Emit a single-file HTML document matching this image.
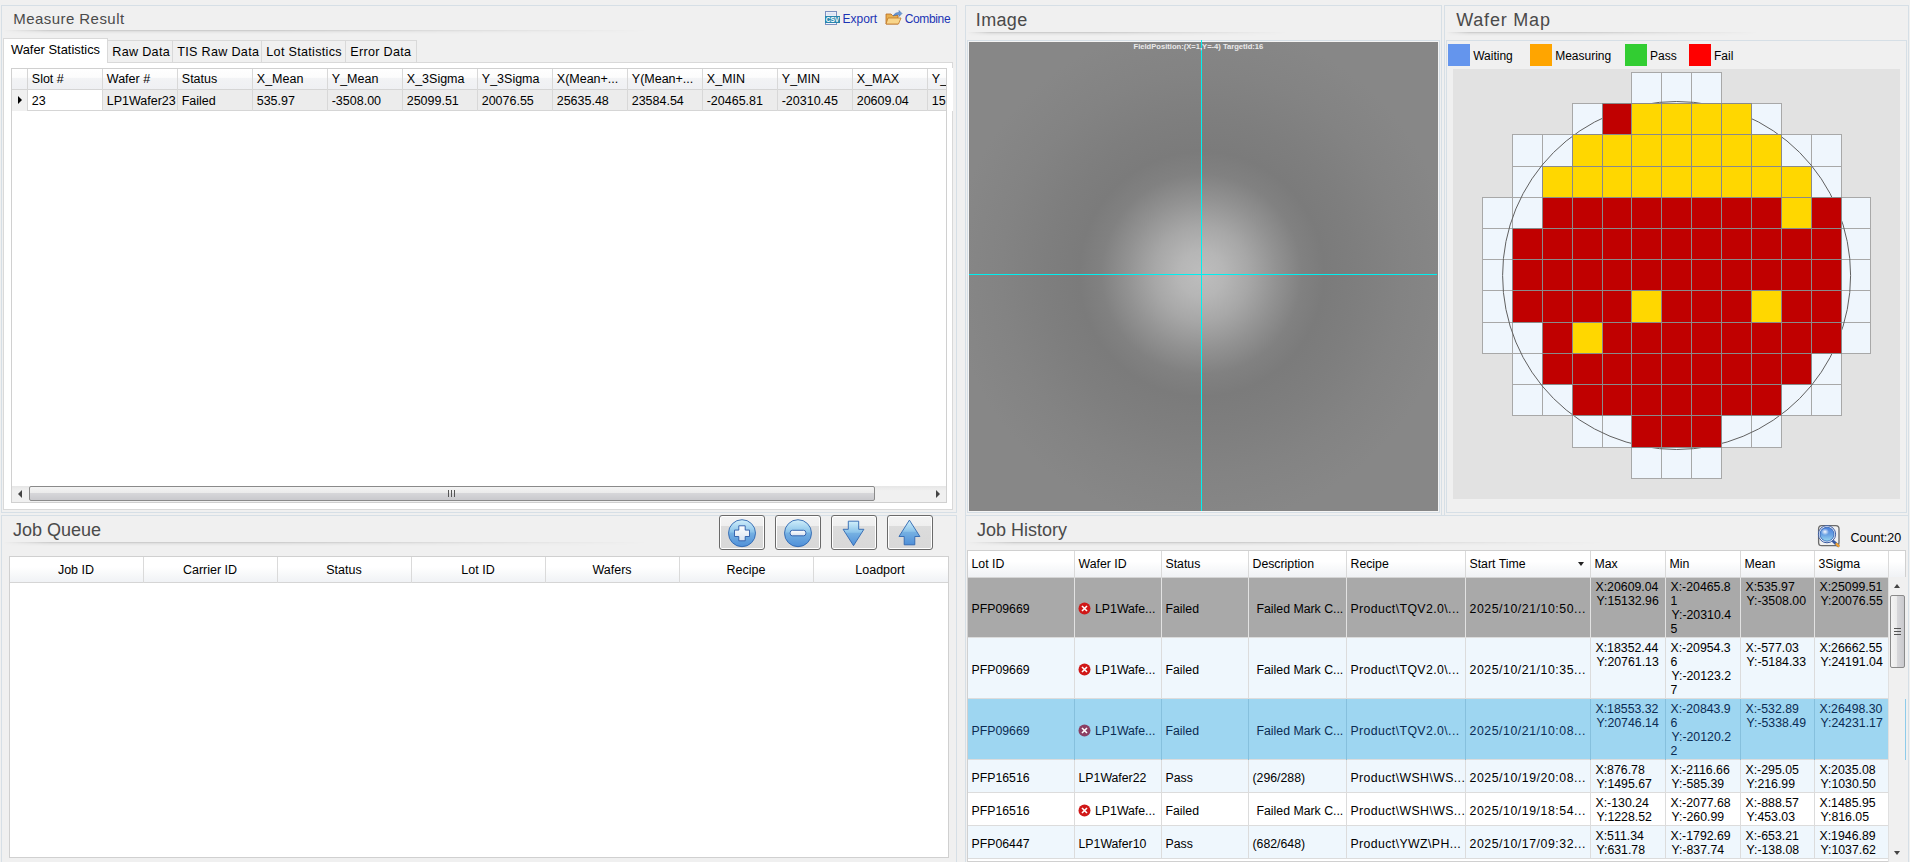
<!DOCTYPE html>
<html><head><meta charset="utf-8">
<style>
*{margin:0;padding:0;box-sizing:border-box}
html,body{width:1910px;height:862px;overflow:hidden;background:#f0f0f0;font-family:"Liberation Sans",sans-serif;font-size:12px;color:#000}
.a{position:absolute}
.t{position:absolute;white-space:nowrap}
.ttl{position:absolute;white-space:nowrap;color:#4a4a4a}
</style></head><body>

<div class="a" style="left:1px;top:5px;width:956px;height:508px;border:1px solid #d6dfe6"></div>
<div class="ttl" style="left:13.2px;top:10.5px;font-size:15px;line-height:15px;letter-spacing:0.45px">Measure Result</div>
<div class="a" style="left:3px;top:30px;width:951px;height:5px;background:linear-gradient(rgba(0,0,0,.14) 0 1px,rgba(0,0,0,.065) 1px 2px,rgba(0,0,0,.03) 2px 3px,rgba(0,0,0,.012) 3px 4px,rgba(0,0,0,0) 4px);-webkit-mask-image:linear-gradient(90deg,rgba(0,0,0,0) 0%,#000 5%,#000 28%,rgba(0,0,0,0) 68%);mask-image:linear-gradient(90deg,rgba(0,0,0,0) 0%,#000 5%,#000 28%,rgba(0,0,0,0) 68%)"></div>
<svg class="a" style="left:824px;top:10px" width="18" height="16" viewBox="0 0 18 16">
<rect x="1.5" y="1.5" width="11" height="13" fill="#f4f6fb" stroke="#7b8fc0"/>
<rect x="2.5" y="2.5" width="9" height="3" fill="#dfe5f4"/>
<rect x="1" y="6" width="15" height="7" fill="#2a86ad"/>
<text x="8.5" y="11.8" font-size="6.5" font-family="Liberation Sans" font-weight="bold" fill="#fff" text-anchor="middle">CSV</text>
</svg>
<div class="t" style="left:842.5px;top:12.6px;font-size:12px;line-height:12px;color:#1c34b4">Export</div>
<svg class="a" style="left:885px;top:10px" width="18" height="16" viewBox="0 0 18 16">
<path d="M1 4 h5 l1.5 1.5 h5.5 v8.5 h-12z" fill="#e8b050" stroke="#b86a20" stroke-width="0.8"/>
<path d="M3 8 h13 l-2.5 6 h-12.5z" fill="#f8d58a" stroke="#c07828" stroke-width="0.8"/>
<path d="M8 6 q2-4 6-3.5 v-2 l3 3 -3 3 v-2 q-3 0-6 1.5z" fill="#6b9ad6" stroke="#3d6fb0" stroke-width="0.5"/>
</svg>
<div class="t" style="left:904.7px;top:12.6px;font-size:12px;line-height:12px;color:#1c34b4;letter-spacing:-0.35px">Combine</div>
<div class="a" style="left:3px;top:62px;width:950px;height:448px;background:#fff;border:1px solid #d9d9d9"></div>
<div class="a" style="left:107px;top:40px;width:66px;height:23px;background:#f0f0f0;border:1px solid #d9d9d9"></div>
<div class="t" style="left:112.3px;top:46.3px;font-size:12.6px;line-height:12.6px;letter-spacing:0.3px">Raw Data</div>
<div class="a" style="left:172px;top:40px;width:90px;height:23px;background:#f0f0f0;border:1px solid #d9d9d9"></div>
<div class="t" style="left:177.3px;top:46.3px;font-size:12.6px;line-height:12.6px;letter-spacing:0.3px">TIS Raw Data</div>
<div class="a" style="left:261px;top:40px;width:85px;height:23px;background:#f0f0f0;border:1px solid #d9d9d9"></div>
<div class="t" style="left:266.3px;top:46.3px;font-size:12.6px;line-height:12.6px;letter-spacing:0.3px">Lot Statistics</div>
<div class="a" style="left:345px;top:40px;width:72px;height:23px;background:#f0f0f0;border:1px solid #d9d9d9"></div>
<div class="t" style="left:350.3px;top:46.3px;font-size:12.6px;line-height:12.6px;letter-spacing:0.3px">Error Data</div>
<div class="a" style="left:3px;top:38px;width:105px;height:25px;background:#fff;border:1px solid #d9d9d9;border-bottom:none"></div>
<div class="t" style="left:11.0px;top:43.6px;font-size:12.9px;line-height:12.9px">Wafer Statistics</div>
<div class="a" style="left:11px;top:68px;width:936px;height:435px;background:#fff;border:1px solid #d0d0d0"></div>
<div class="a" style="left:12px;top:69px;width:934px;height:21px;background:linear-gradient(#fff 0%,#fcfcfc 42%,#f2f3f5 48%,#eff0f3 100%);border-bottom:1px solid #d5d5d5"></div>
<div class="a" style="left:12px;top:69px;width:16px;height:21px;border-right:1px solid #d5d5d5"></div>
<div class="a" style="left:12px;top:90px;width:934px;height:21px;background:#ececec;border-bottom:1px solid #d5d5d5"></div>
<div class="a" style="left:12px;top:90px;width:16px;height:21px;background:#f0f0f0;border-right:1px solid #d5d5d5"></div>
<div class="a" style="left:28px;top:90px;width:74px;height:20px;background:#fff"></div>
<div class="a" style="left:18px;top:96px;width:0;height:0;border-top:4px solid transparent;border-bottom:4px solid transparent;border-left:4px solid #000"></div>
<div class="t" style="left:31.8px;top:72.8px;font-size:12.5px;line-height:12.5px">Slot #</div>
<div class="t" style="left:31.7px;top:94.5px;font-size:12.5px;line-height:12.5px">23</div>
<div class="a" style="left:102px;top:69px;width:1px;height:42px;background:#d8d8d8"></div>
<div class="t" style="left:106.8px;top:72.8px;font-size:12.5px;line-height:12.5px">Wafer #</div>
<div class="t" style="left:106.7px;top:94.5px;font-size:12.5px;line-height:12.5px">LP1Wafer23</div>
<div class="a" style="left:177px;top:69px;width:1px;height:42px;background:#d8d8d8"></div>
<div class="t" style="left:181.8px;top:72.8px;font-size:12.5px;line-height:12.5px">Status</div>
<div class="t" style="left:181.7px;top:94.5px;font-size:12.5px;line-height:12.5px">Failed</div>
<div class="a" style="left:252px;top:69px;width:1px;height:42px;background:#d8d8d8"></div>
<div class="t" style="left:256.8px;top:72.8px;font-size:12.5px;line-height:12.5px">X_Mean</div>
<div class="t" style="left:256.7px;top:94.5px;font-size:12.5px;line-height:12.5px">535.97</div>
<div class="a" style="left:327px;top:69px;width:1px;height:42px;background:#d8d8d8"></div>
<div class="t" style="left:331.8px;top:72.8px;font-size:12.5px;line-height:12.5px">Y_Mean</div>
<div class="t" style="left:331.7px;top:94.5px;font-size:12.5px;line-height:12.5px">-3508.00</div>
<div class="a" style="left:402px;top:69px;width:1px;height:42px;background:#d8d8d8"></div>
<div class="t" style="left:406.8px;top:72.8px;font-size:12.5px;line-height:12.5px">X_3Sigma</div>
<div class="t" style="left:406.7px;top:94.5px;font-size:12.5px;line-height:12.5px">25099.51</div>
<div class="a" style="left:477px;top:69px;width:1px;height:42px;background:#d8d8d8"></div>
<div class="t" style="left:481.8px;top:72.8px;font-size:12.5px;line-height:12.5px">Y_3Sigma</div>
<div class="t" style="left:481.7px;top:94.5px;font-size:12.5px;line-height:12.5px">20076.55</div>
<div class="a" style="left:552px;top:69px;width:1px;height:42px;background:#d8d8d8"></div>
<div class="t" style="left:556.8px;top:72.8px;font-size:12.5px;line-height:12.5px">X(Mean+...</div>
<div class="t" style="left:556.7px;top:94.5px;font-size:12.5px;line-height:12.5px">25635.48</div>
<div class="a" style="left:627px;top:69px;width:1px;height:42px;background:#d8d8d8"></div>
<div class="t" style="left:631.8px;top:72.8px;font-size:12.5px;line-height:12.5px">Y(Mean+...</div>
<div class="t" style="left:631.7px;top:94.5px;font-size:12.5px;line-height:12.5px">23584.54</div>
<div class="a" style="left:702px;top:69px;width:1px;height:42px;background:#d8d8d8"></div>
<div class="t" style="left:706.8px;top:72.8px;font-size:12.5px;line-height:12.5px">X_MIN</div>
<div class="t" style="left:706.7px;top:94.5px;font-size:12.5px;line-height:12.5px">-20465.81</div>
<div class="a" style="left:777px;top:69px;width:1px;height:42px;background:#d8d8d8"></div>
<div class="t" style="left:781.8px;top:72.8px;font-size:12.5px;line-height:12.5px">Y_MIN</div>
<div class="t" style="left:781.7px;top:94.5px;font-size:12.5px;line-height:12.5px">-20310.45</div>
<div class="a" style="left:852px;top:69px;width:1px;height:42px;background:#d8d8d8"></div>
<div class="t" style="left:856.8px;top:72.8px;font-size:12.5px;line-height:12.5px">X_MAX</div>
<div class="t" style="left:856.7px;top:94.5px;font-size:12.5px;line-height:12.5px">20609.04</div>
<div class="a" style="left:927px;top:69px;width:1px;height:42px;background:#d8d8d8"></div>
<div class="t" style="left:931.8px;top:72.8px;font-size:12.5px;line-height:12.5px">Y_</div>
<div class="t" style="left:931.7px;top:94.5px;font-size:12.5px;line-height:12.5px">15</div>
<div class="a" style="left:946px;top:68px;width:7px;height:43px;background:#fff"></div>
<div class="a" style="left:946px;top:68px;width:1px;height:435px;background:#d0d0d0"></div>
<div class="a" style="left:12px;top:486px;width:934px;height:16px;background:linear-gradient(#e6e6e6,#f0f0f0 30%,#f0f0f0)"></div>
<div class="a" style="left:18px;top:490px;width:0;height:0;border-top:4px solid transparent;border-bottom:4px solid transparent;border-right:4px solid #444"></div>
<div class="a" style="left:936px;top:490px;width:0;height:0;border-top:4px solid transparent;border-bottom:4px solid transparent;border-left:4px solid #444"></div>
<div class="a" style="left:29px;top:486px;width:846px;height:15px;border:1px solid #8a8a8a;border-radius:2px;background:linear-gradient(#f4f4f4 0%,#ebebeb 45%,#d6d6d9 50%,#c9c9cd 100%)"></div>
<div class="a" style="left:448px;top:490px;width:1px;height:7px;background:#555"></div>
<div class="a" style="left:451px;top:490px;width:1px;height:7px;background:#555"></div>
<div class="a" style="left:454px;top:490px;width:1px;height:7px;background:#555"></div>
<div class="a" style="left:965px;top:5px;width:477px;height:511px;border:1px solid #d6dfe6"></div>
<div class="ttl" style="left:975.8px;top:10.5px;font-size:18px;line-height:18px;letter-spacing:0.35px">Image</div>
<div class="a" style="left:967px;top:32px;width:472px;height:5px;background:linear-gradient(rgba(0,0,0,.14) 0 1px,rgba(0,0,0,.065) 1px 2px,rgba(0,0,0,.03) 2px 3px,rgba(0,0,0,.012) 3px 4px,rgba(0,0,0,0) 4px);-webkit-mask-image:linear-gradient(90deg,rgba(0,0,0,0) 0%,#000 5%,#000 28%,rgba(0,0,0,0) 68%);mask-image:linear-gradient(90deg,rgba(0,0,0,0) 0%,#000 5%,#000 28%,rgba(0,0,0,0) 68%)"></div>
<div class="a" style="left:967px;top:40px;width:473px;height:473px;border:1px solid #d6dfe6;background:#f4f4f4"></div>
<div class="a" style="left:969px;top:42px;width:469px;height:469px;background:radial-gradient(circle 250px at 232.5px 232px,#bdbdbd 0%,#b6b6b6 9%,#a7a7a7 19%,#929292 30%,#818181 40%,#7b7b7b 49%,#7e7e7e 62%,#838383 80%,#878787 100%)"></div>
<div class="a" style="left:1201px;top:40px;width:1px;height:471px;background:#00f0f0"></div>
<div class="a" style="left:969px;top:274px;width:468px;height:1px;background:#00f0f0"></div>
<div class="t" style="left:1133.5px;top:43.0px;font-size:7.6px;line-height:7.6px;color:#eaeaea;font-weight:bold">FieldPosition:(X=1,Y=-4) TargetId:16</div>
<div class="a" style="left:1444px;top:5px;width:465px;height:511px;border:1px solid #d6dfe6"></div>
<div class="ttl" style="left:1456.2px;top:10.6px;font-size:18px;line-height:18px;letter-spacing:0.8px">Wafer Map</div>
<div class="a" style="left:1446px;top:32px;width:460px;height:5px;background:linear-gradient(rgba(0,0,0,.14) 0 1px,rgba(0,0,0,.065) 1px 2px,rgba(0,0,0,.03) 2px 3px,rgba(0,0,0,.012) 3px 4px,rgba(0,0,0,0) 4px);-webkit-mask-image:linear-gradient(90deg,rgba(0,0,0,0) 0%,#000 5%,#000 28%,rgba(0,0,0,0) 68%);mask-image:linear-gradient(90deg,rgba(0,0,0,0) 0%,#000 5%,#000 28%,rgba(0,0,0,0) 68%)"></div>
<div class="a" style="left:1446px;top:40px;width:461px;height:473px;border:1px solid #d6dfe6"></div>
<div class="a" style="left:1448px;top:44px;width:22px;height:22px;background:#6495ed"></div>
<div class="t" style="left:1473.2px;top:50.1px;font-size:12px;line-height:12px">Waiting</div>
<div class="a" style="left:1530px;top:44px;width:22px;height:22px;background:#ffa500"></div>
<div class="t" style="left:1555.2px;top:50.1px;font-size:12px;line-height:12px">Measuring</div>
<div class="a" style="left:1625px;top:44px;width:22px;height:22px;background:#32cd32"></div>
<div class="t" style="left:1650.0px;top:50.1px;font-size:12px;line-height:12px">Pass</div>
<div class="a" style="left:1689px;top:44px;width:22px;height:22px;background:#ff0000"></div>
<div class="t" style="left:1714.0px;top:50.1px;font-size:12px;line-height:12px">Fail</div>
<div class="a" style="left:1453px;top:69px;width:447px;height:430px;background:#e2e2e2"></div>
<svg class="a" style="left:1453px;top:69px" width="447" height="430" viewBox="0 0 447 430" shape-rendering="crispEdges">
<rect x="178.90" y="3.40" width="29.88" height="31.22" fill="#eff6fd" stroke="#a8a8a8" stroke-width="1"/>
<rect x="208.78" y="3.40" width="29.88" height="31.22" fill="#eff6fd" stroke="#a8a8a8" stroke-width="1"/>
<rect x="238.66" y="3.40" width="29.88" height="31.22" fill="#eff6fd" stroke="#a8a8a8" stroke-width="1"/>
<rect x="119.14" y="34.62" width="29.88" height="31.22" fill="#eff6fd" stroke="#a8a8a8" stroke-width="1"/>
<rect x="298.42" y="34.62" width="29.88" height="31.22" fill="#eff6fd" stroke="#a8a8a8" stroke-width="1"/>
<rect x="59.38" y="65.84" width="29.88" height="31.22" fill="#eff6fd" stroke="#a8a8a8" stroke-width="1"/>
<rect x="89.26" y="65.84" width="29.88" height="31.22" fill="#eff6fd" stroke="#a8a8a8" stroke-width="1"/>
<rect x="328.30" y="65.84" width="29.88" height="31.22" fill="#eff6fd" stroke="#a8a8a8" stroke-width="1"/>
<rect x="358.18" y="65.84" width="29.88" height="31.22" fill="#eff6fd" stroke="#a8a8a8" stroke-width="1"/>
<rect x="59.38" y="97.06" width="29.88" height="31.22" fill="#eff6fd" stroke="#a8a8a8" stroke-width="1"/>
<rect x="358.18" y="97.06" width="29.88" height="31.22" fill="#eff6fd" stroke="#a8a8a8" stroke-width="1"/>
<rect x="29.50" y="128.28" width="29.88" height="31.22" fill="#eff6fd" stroke="#a8a8a8" stroke-width="1"/>
<rect x="59.38" y="128.28" width="29.88" height="31.22" fill="#eff6fd" stroke="#a8a8a8" stroke-width="1"/>
<rect x="388.06" y="128.28" width="29.88" height="31.22" fill="#eff6fd" stroke="#a8a8a8" stroke-width="1"/>
<rect x="29.50" y="159.50" width="29.88" height="31.22" fill="#eff6fd" stroke="#a8a8a8" stroke-width="1"/>
<rect x="388.06" y="159.50" width="29.88" height="31.22" fill="#eff6fd" stroke="#a8a8a8" stroke-width="1"/>
<rect x="29.50" y="190.72" width="29.88" height="31.22" fill="#eff6fd" stroke="#a8a8a8" stroke-width="1"/>
<rect x="388.06" y="190.72" width="29.88" height="31.22" fill="#eff6fd" stroke="#a8a8a8" stroke-width="1"/>
<rect x="29.50" y="221.94" width="29.88" height="31.22" fill="#eff6fd" stroke="#a8a8a8" stroke-width="1"/>
<rect x="388.06" y="221.94" width="29.88" height="31.22" fill="#eff6fd" stroke="#a8a8a8" stroke-width="1"/>
<rect x="29.50" y="253.16" width="29.88" height="31.22" fill="#eff6fd" stroke="#a8a8a8" stroke-width="1"/>
<rect x="59.38" y="253.16" width="29.88" height="31.22" fill="#eff6fd" stroke="#a8a8a8" stroke-width="1"/>
<rect x="388.06" y="253.16" width="29.88" height="31.22" fill="#eff6fd" stroke="#a8a8a8" stroke-width="1"/>
<rect x="59.38" y="284.38" width="29.88" height="31.22" fill="#eff6fd" stroke="#a8a8a8" stroke-width="1"/>
<rect x="358.18" y="284.38" width="29.88" height="31.22" fill="#eff6fd" stroke="#a8a8a8" stroke-width="1"/>
<rect x="59.38" y="315.60" width="29.88" height="31.22" fill="#eff6fd" stroke="#a8a8a8" stroke-width="1"/>
<rect x="89.26" y="315.60" width="29.88" height="31.22" fill="#eff6fd" stroke="#a8a8a8" stroke-width="1"/>
<rect x="328.30" y="315.60" width="29.88" height="31.22" fill="#eff6fd" stroke="#a8a8a8" stroke-width="1"/>
<rect x="358.18" y="315.60" width="29.88" height="31.22" fill="#eff6fd" stroke="#a8a8a8" stroke-width="1"/>
<rect x="119.14" y="346.82" width="29.88" height="31.22" fill="#eff6fd" stroke="#a8a8a8" stroke-width="1"/>
<rect x="149.02" y="346.82" width="29.88" height="31.22" fill="#eff6fd" stroke="#a8a8a8" stroke-width="1"/>
<rect x="268.54" y="346.82" width="29.88" height="31.22" fill="#eff6fd" stroke="#a8a8a8" stroke-width="1"/>
<rect x="298.42" y="346.82" width="29.88" height="31.22" fill="#eff6fd" stroke="#a8a8a8" stroke-width="1"/>
<rect x="178.90" y="378.04" width="29.88" height="31.22" fill="#eff6fd" stroke="#a8a8a8" stroke-width="1"/>
<rect x="208.78" y="378.04" width="29.88" height="31.22" fill="#eff6fd" stroke="#a8a8a8" stroke-width="1"/>
<rect x="238.66" y="378.04" width="29.88" height="31.22" fill="#eff6fd" stroke="#a8a8a8" stroke-width="1"/>
<circle cx="223.5999999999999" cy="206.5" r="174" fill="none" stroke="#606060" stroke-width="1" shape-rendering="geometricPrecision"/>
<rect x="149.02" y="34.62" width="29.88" height="31.22" fill="#c00000" stroke="#8a8a8a" stroke-width="1"/>
<rect x="178.90" y="34.62" width="29.88" height="31.22" fill="#ffd700" stroke="#8a8a8a" stroke-width="1"/>
<rect x="208.78" y="34.62" width="29.88" height="31.22" fill="#ffd700" stroke="#8a8a8a" stroke-width="1"/>
<rect x="238.66" y="34.62" width="29.88" height="31.22" fill="#ffd700" stroke="#8a8a8a" stroke-width="1"/>
<rect x="268.54" y="34.62" width="29.88" height="31.22" fill="#ffd700" stroke="#8a8a8a" stroke-width="1"/>
<rect x="119.14" y="65.84" width="29.88" height="31.22" fill="#ffd700" stroke="#8a8a8a" stroke-width="1"/>
<rect x="149.02" y="65.84" width="29.88" height="31.22" fill="#ffd700" stroke="#8a8a8a" stroke-width="1"/>
<rect x="178.90" y="65.84" width="29.88" height="31.22" fill="#ffd700" stroke="#8a8a8a" stroke-width="1"/>
<rect x="208.78" y="65.84" width="29.88" height="31.22" fill="#ffd700" stroke="#8a8a8a" stroke-width="1"/>
<rect x="238.66" y="65.84" width="29.88" height="31.22" fill="#ffd700" stroke="#8a8a8a" stroke-width="1"/>
<rect x="268.54" y="65.84" width="29.88" height="31.22" fill="#ffd700" stroke="#8a8a8a" stroke-width="1"/>
<rect x="298.42" y="65.84" width="29.88" height="31.22" fill="#ffd700" stroke="#8a8a8a" stroke-width="1"/>
<rect x="89.26" y="97.06" width="29.88" height="31.22" fill="#ffd700" stroke="#8a8a8a" stroke-width="1"/>
<rect x="119.14" y="97.06" width="29.88" height="31.22" fill="#ffd700" stroke="#8a8a8a" stroke-width="1"/>
<rect x="149.02" y="97.06" width="29.88" height="31.22" fill="#ffd700" stroke="#8a8a8a" stroke-width="1"/>
<rect x="178.90" y="97.06" width="29.88" height="31.22" fill="#ffd700" stroke="#8a8a8a" stroke-width="1"/>
<rect x="208.78" y="97.06" width="29.88" height="31.22" fill="#ffd700" stroke="#8a8a8a" stroke-width="1"/>
<rect x="238.66" y="97.06" width="29.88" height="31.22" fill="#ffd700" stroke="#8a8a8a" stroke-width="1"/>
<rect x="268.54" y="97.06" width="29.88" height="31.22" fill="#ffd700" stroke="#8a8a8a" stroke-width="1"/>
<rect x="298.42" y="97.06" width="29.88" height="31.22" fill="#ffd700" stroke="#8a8a8a" stroke-width="1"/>
<rect x="328.30" y="97.06" width="29.88" height="31.22" fill="#ffd700" stroke="#8a8a8a" stroke-width="1"/>
<rect x="89.26" y="128.28" width="29.88" height="31.22" fill="#c00000" stroke="#8a8a8a" stroke-width="1"/>
<rect x="119.14" y="128.28" width="29.88" height="31.22" fill="#c00000" stroke="#8a8a8a" stroke-width="1"/>
<rect x="149.02" y="128.28" width="29.88" height="31.22" fill="#c00000" stroke="#8a8a8a" stroke-width="1"/>
<rect x="178.90" y="128.28" width="29.88" height="31.22" fill="#c00000" stroke="#8a8a8a" stroke-width="1"/>
<rect x="208.78" y="128.28" width="29.88" height="31.22" fill="#c00000" stroke="#8a8a8a" stroke-width="1"/>
<rect x="238.66" y="128.28" width="29.88" height="31.22" fill="#c00000" stroke="#8a8a8a" stroke-width="1"/>
<rect x="268.54" y="128.28" width="29.88" height="31.22" fill="#c00000" stroke="#8a8a8a" stroke-width="1"/>
<rect x="298.42" y="128.28" width="29.88" height="31.22" fill="#c00000" stroke="#8a8a8a" stroke-width="1"/>
<rect x="328.30" y="128.28" width="29.88" height="31.22" fill="#ffd700" stroke="#8a8a8a" stroke-width="1"/>
<rect x="358.18" y="128.28" width="29.88" height="31.22" fill="#c00000" stroke="#8a8a8a" stroke-width="1"/>
<rect x="59.38" y="159.50" width="29.88" height="31.22" fill="#c00000" stroke="#8a8a8a" stroke-width="1"/>
<rect x="89.26" y="159.50" width="29.88" height="31.22" fill="#c00000" stroke="#8a8a8a" stroke-width="1"/>
<rect x="119.14" y="159.50" width="29.88" height="31.22" fill="#c00000" stroke="#8a8a8a" stroke-width="1"/>
<rect x="149.02" y="159.50" width="29.88" height="31.22" fill="#c00000" stroke="#8a8a8a" stroke-width="1"/>
<rect x="178.90" y="159.50" width="29.88" height="31.22" fill="#c00000" stroke="#8a8a8a" stroke-width="1"/>
<rect x="208.78" y="159.50" width="29.88" height="31.22" fill="#c00000" stroke="#8a8a8a" stroke-width="1"/>
<rect x="238.66" y="159.50" width="29.88" height="31.22" fill="#c00000" stroke="#8a8a8a" stroke-width="1"/>
<rect x="268.54" y="159.50" width="29.88" height="31.22" fill="#c00000" stroke="#8a8a8a" stroke-width="1"/>
<rect x="298.42" y="159.50" width="29.88" height="31.22" fill="#c00000" stroke="#8a8a8a" stroke-width="1"/>
<rect x="328.30" y="159.50" width="29.88" height="31.22" fill="#c00000" stroke="#8a8a8a" stroke-width="1"/>
<rect x="358.18" y="159.50" width="29.88" height="31.22" fill="#c00000" stroke="#8a8a8a" stroke-width="1"/>
<rect x="59.38" y="190.72" width="29.88" height="31.22" fill="#c00000" stroke="#8a8a8a" stroke-width="1"/>
<rect x="89.26" y="190.72" width="29.88" height="31.22" fill="#c00000" stroke="#8a8a8a" stroke-width="1"/>
<rect x="119.14" y="190.72" width="29.88" height="31.22" fill="#c00000" stroke="#8a8a8a" stroke-width="1"/>
<rect x="149.02" y="190.72" width="29.88" height="31.22" fill="#c00000" stroke="#8a8a8a" stroke-width="1"/>
<rect x="178.90" y="190.72" width="29.88" height="31.22" fill="#c00000" stroke="#8a8a8a" stroke-width="1"/>
<rect x="208.78" y="190.72" width="29.88" height="31.22" fill="#c00000" stroke="#8a8a8a" stroke-width="1"/>
<rect x="238.66" y="190.72" width="29.88" height="31.22" fill="#c00000" stroke="#8a8a8a" stroke-width="1"/>
<rect x="268.54" y="190.72" width="29.88" height="31.22" fill="#c00000" stroke="#8a8a8a" stroke-width="1"/>
<rect x="298.42" y="190.72" width="29.88" height="31.22" fill="#c00000" stroke="#8a8a8a" stroke-width="1"/>
<rect x="328.30" y="190.72" width="29.88" height="31.22" fill="#c00000" stroke="#8a8a8a" stroke-width="1"/>
<rect x="358.18" y="190.72" width="29.88" height="31.22" fill="#c00000" stroke="#8a8a8a" stroke-width="1"/>
<rect x="59.38" y="221.94" width="29.88" height="31.22" fill="#c00000" stroke="#8a8a8a" stroke-width="1"/>
<rect x="89.26" y="221.94" width="29.88" height="31.22" fill="#c00000" stroke="#8a8a8a" stroke-width="1"/>
<rect x="119.14" y="221.94" width="29.88" height="31.22" fill="#c00000" stroke="#8a8a8a" stroke-width="1"/>
<rect x="149.02" y="221.94" width="29.88" height="31.22" fill="#c00000" stroke="#8a8a8a" stroke-width="1"/>
<rect x="178.90" y="221.94" width="29.88" height="31.22" fill="#ffd700" stroke="#8a8a8a" stroke-width="1"/>
<rect x="208.78" y="221.94" width="29.88" height="31.22" fill="#c00000" stroke="#8a8a8a" stroke-width="1"/>
<rect x="238.66" y="221.94" width="29.88" height="31.22" fill="#c00000" stroke="#8a8a8a" stroke-width="1"/>
<rect x="268.54" y="221.94" width="29.88" height="31.22" fill="#c00000" stroke="#8a8a8a" stroke-width="1"/>
<rect x="298.42" y="221.94" width="29.88" height="31.22" fill="#ffd700" stroke="#8a8a8a" stroke-width="1"/>
<rect x="328.30" y="221.94" width="29.88" height="31.22" fill="#c00000" stroke="#8a8a8a" stroke-width="1"/>
<rect x="358.18" y="221.94" width="29.88" height="31.22" fill="#c00000" stroke="#8a8a8a" stroke-width="1"/>
<rect x="89.26" y="253.16" width="29.88" height="31.22" fill="#c00000" stroke="#8a8a8a" stroke-width="1"/>
<rect x="119.14" y="253.16" width="29.88" height="31.22" fill="#ffd700" stroke="#8a8a8a" stroke-width="1"/>
<rect x="149.02" y="253.16" width="29.88" height="31.22" fill="#c00000" stroke="#8a8a8a" stroke-width="1"/>
<rect x="178.90" y="253.16" width="29.88" height="31.22" fill="#c00000" stroke="#8a8a8a" stroke-width="1"/>
<rect x="208.78" y="253.16" width="29.88" height="31.22" fill="#c00000" stroke="#8a8a8a" stroke-width="1"/>
<rect x="238.66" y="253.16" width="29.88" height="31.22" fill="#c00000" stroke="#8a8a8a" stroke-width="1"/>
<rect x="268.54" y="253.16" width="29.88" height="31.22" fill="#c00000" stroke="#8a8a8a" stroke-width="1"/>
<rect x="298.42" y="253.16" width="29.88" height="31.22" fill="#c00000" stroke="#8a8a8a" stroke-width="1"/>
<rect x="328.30" y="253.16" width="29.88" height="31.22" fill="#c00000" stroke="#8a8a8a" stroke-width="1"/>
<rect x="358.18" y="253.16" width="29.88" height="31.22" fill="#c00000" stroke="#8a8a8a" stroke-width="1"/>
<rect x="89.26" y="284.38" width="29.88" height="31.22" fill="#c00000" stroke="#8a8a8a" stroke-width="1"/>
<rect x="119.14" y="284.38" width="29.88" height="31.22" fill="#c00000" stroke="#8a8a8a" stroke-width="1"/>
<rect x="149.02" y="284.38" width="29.88" height="31.22" fill="#c00000" stroke="#8a8a8a" stroke-width="1"/>
<rect x="178.90" y="284.38" width="29.88" height="31.22" fill="#c00000" stroke="#8a8a8a" stroke-width="1"/>
<rect x="208.78" y="284.38" width="29.88" height="31.22" fill="#c00000" stroke="#8a8a8a" stroke-width="1"/>
<rect x="238.66" y="284.38" width="29.88" height="31.22" fill="#c00000" stroke="#8a8a8a" stroke-width="1"/>
<rect x="268.54" y="284.38" width="29.88" height="31.22" fill="#c00000" stroke="#8a8a8a" stroke-width="1"/>
<rect x="298.42" y="284.38" width="29.88" height="31.22" fill="#c00000" stroke="#8a8a8a" stroke-width="1"/>
<rect x="328.30" y="284.38" width="29.88" height="31.22" fill="#c00000" stroke="#8a8a8a" stroke-width="1"/>
<rect x="119.14" y="315.60" width="29.88" height="31.22" fill="#c00000" stroke="#8a8a8a" stroke-width="1"/>
<rect x="149.02" y="315.60" width="29.88" height="31.22" fill="#c00000" stroke="#8a8a8a" stroke-width="1"/>
<rect x="178.90" y="315.60" width="29.88" height="31.22" fill="#c00000" stroke="#8a8a8a" stroke-width="1"/>
<rect x="208.78" y="315.60" width="29.88" height="31.22" fill="#c00000" stroke="#8a8a8a" stroke-width="1"/>
<rect x="238.66" y="315.60" width="29.88" height="31.22" fill="#c00000" stroke="#8a8a8a" stroke-width="1"/>
<rect x="268.54" y="315.60" width="29.88" height="31.22" fill="#c00000" stroke="#8a8a8a" stroke-width="1"/>
<rect x="298.42" y="315.60" width="29.88" height="31.22" fill="#c00000" stroke="#8a8a8a" stroke-width="1"/>
<rect x="178.90" y="346.82" width="29.88" height="31.22" fill="#c00000" stroke="#8a8a8a" stroke-width="1"/>
<rect x="208.78" y="346.82" width="29.88" height="31.22" fill="#c00000" stroke="#8a8a8a" stroke-width="1"/>
<rect x="238.66" y="346.82" width="29.88" height="31.22" fill="#c00000" stroke="#8a8a8a" stroke-width="1"/>
</svg>
<div class="a" style="left:1px;top:515px;width:956px;height:356px;border:1px solid #d6dfe6"></div>
<div class="ttl" style="left:13.0px;top:520.8px;font-size:18px;line-height:18px">Job Queue</div>
<div class="a" style="left:3px;top:542px;width:951px;height:5px;background:linear-gradient(rgba(0,0,0,.14) 0 1px,rgba(0,0,0,.065) 1px 2px,rgba(0,0,0,.03) 2px 3px,rgba(0,0,0,.012) 3px 4px,rgba(0,0,0,0) 4px);-webkit-mask-image:linear-gradient(90deg,rgba(0,0,0,0) 0%,#000 5%,#000 28%,rgba(0,0,0,0) 68%);mask-image:linear-gradient(90deg,rgba(0,0,0,0) 0%,#000 5%,#000 28%,rgba(0,0,0,0) 68%)"></div>
<div class="a" style="left:719px;top:515px;width:46px;height:35px;border:1px solid #6a6a6a;border-radius:3px;background:linear-gradient(#f3f3f3 0%,#efefef 30%,#dcdcdc 31%,#d8d8d8 100%);box-shadow:inset 0 0 0 1px #fff"></div>
<div class="a" style="left:775px;top:515px;width:46px;height:35px;border:1px solid #6a6a6a;border-radius:3px;background:linear-gradient(#f3f3f3 0%,#efefef 30%,#dcdcdc 31%,#d8d8d8 100%);box-shadow:inset 0 0 0 1px #fff"></div>
<div class="a" style="left:831px;top:515px;width:46px;height:35px;border:1px solid #6a6a6a;border-radius:3px;background:linear-gradient(#f3f3f3 0%,#efefef 30%,#dcdcdc 31%,#d8d8d8 100%);box-shadow:inset 0 0 0 1px #fff"></div>
<div class="a" style="left:887px;top:515px;width:46px;height:35px;border:1px solid #6a6a6a;border-radius:3px;background:linear-gradient(#f3f3f3 0%,#efefef 30%,#dcdcdc 31%,#d8d8d8 100%);box-shadow:inset 0 0 0 1px #fff"></div>
<svg class="a" style="left:715px;top:512px" width="225" height="43" viewBox="0 0 225 43"><defs><linearGradient id="g1" x1="0" y1="0" x2="0" y2="1"><stop offset="0" stop-color="#d2f0fb"/><stop offset="0.45" stop-color="#8cc4ea"/><stop offset="0.5" stop-color="#75b0e2"/><stop offset="1" stop-color="#4f8fd8"/></linearGradient><linearGradient id="w1" x1="0" y1="0" x2="0" y2="1"><stop offset="0" stop-color="#ffffff"/><stop offset="1" stop-color="#d8e2f0"/></linearGradient></defs><circle cx="27" cy="21.2" r="13.5" fill="url(#g1)" stroke="#2f66b0" stroke-width="0.9"/><path d="M23.8 13.8h6.4v4.3h4.3v6.4h-4.3v4.3h-6.4v-4.3h-4.3v-6.4h4.3z" fill="url(#w1)" stroke="#2a5aa8" stroke-width="0.9" stroke-linejoin="round"/><circle cx="83" cy="21.2" r="13.5" fill="url(#g1)" stroke="#2f66b0" stroke-width="0.9"/><rect x="75.2" y="18.3" width="15.6" height="5.5" rx="2.2" fill="url(#w1)" stroke="#2a5aa8" stroke-width="0.9"/><path d="M133.3 9.2h10.4v8.1h5.2l-10.4 16.4 -10.4-16.4h5.2z" fill="url(#g1)" stroke="#2f66b0" stroke-width="0.9" stroke-linejoin="round"/><path d="M194.4 8.1l10.5 16.4h-5.1v8.3h-10.6v-8.3h-5.2z" fill="url(#g1)" stroke="#2f66b0" stroke-width="0.9" stroke-linejoin="round"/></svg>
<div class="a" style="left:9px;top:556px;width:940px;height:302px;background:#fff;border:1px solid #d0d0d0"></div>
<div class="a" style="left:10px;top:557px;width:938px;height:26px;background:linear-gradient(#fff 0%,#fff 40%,#f0f2f5 100%);border-bottom:1px solid #d5d5d5"></div>
<div class="t" style="left:9px;top:564.4px;width:134px;text-align:center;font-size:12.5px;line-height:12.5px">Job ID</div>
<div class="a" style="left:143px;top:557px;width:1px;height:26px;background:#dadada"></div>
<div class="t" style="left:143px;top:564.4px;width:134px;text-align:center;font-size:12.5px;line-height:12.5px">Carrier ID</div>
<div class="a" style="left:277px;top:557px;width:1px;height:26px;background:#dadada"></div>
<div class="t" style="left:277px;top:564.4px;width:134px;text-align:center;font-size:12.5px;line-height:12.5px">Status</div>
<div class="a" style="left:411px;top:557px;width:1px;height:26px;background:#dadada"></div>
<div class="t" style="left:411px;top:564.4px;width:134px;text-align:center;font-size:12.5px;line-height:12.5px">Lot ID</div>
<div class="a" style="left:545px;top:557px;width:1px;height:26px;background:#dadada"></div>
<div class="t" style="left:545px;top:564.4px;width:134px;text-align:center;font-size:12.5px;line-height:12.5px">Wafers</div>
<div class="a" style="left:679px;top:557px;width:1px;height:26px;background:#dadada"></div>
<div class="t" style="left:679px;top:564.4px;width:134px;text-align:center;font-size:12.5px;line-height:12.5px">Recipe</div>
<div class="a" style="left:813px;top:557px;width:1px;height:26px;background:#dadada"></div>
<div class="t" style="left:813px;top:564.4px;width:134px;text-align:center;font-size:12.5px;line-height:12.5px">Loadport</div>
<div class="a" style="left:965px;top:515px;width:944px;height:356px;border:1px solid #d6dfe6"></div>
<div class="ttl" style="left:977.0px;top:520.5px;font-size:18px;line-height:18px">Job History</div>
<div class="a" style="left:967px;top:542px;width:939px;height:5px;background:linear-gradient(rgba(0,0,0,.14) 0 1px,rgba(0,0,0,.065) 1px 2px,rgba(0,0,0,.03) 2px 3px,rgba(0,0,0,.012) 3px 4px,rgba(0,0,0,0) 4px);-webkit-mask-image:linear-gradient(90deg,rgba(0,0,0,0) 0%,#000 5%,#000 28%,rgba(0,0,0,0) 68%);mask-image:linear-gradient(90deg,rgba(0,0,0,0) 0%,#000 5%,#000 28%,rgba(0,0,0,0) 68%)"></div>
<svg class="a" style="left:1812px;top:520px" width="32" height="30" viewBox="0 0 32 30">
<defs><linearGradient id="sgl" x1="0" y1="0" x2="0" y2="1"><stop offset="0" stop-color="#4a7fdc"/><stop offset="0.55" stop-color="#6aa3e4"/><stop offset="1" stop-color="#9ad8f0"/></linearGradient>
<radialGradient id="shl" cx="0.5" cy="0.5" r="0.5"><stop offset="0" stop-color="#fff" stop-opacity="0.95"/><stop offset="1" stop-color="#fff" stop-opacity="0"/></radialGradient></defs>
<rect x="6.6" y="5.6" width="20.4" height="20" rx="3.2" fill="none" stroke="#6a6a6a" stroke-width="1.3"/>
<path d="M21.5 21.5 l4.5 4.2" stroke="#3a5aa0" stroke-width="3" stroke-linecap="round"/>
<path d="M24.6 24.1 l1.8 1.8" stroke="#f0a030" stroke-width="2.6" stroke-linecap="round"/>
<circle cx="15" cy="14.2" r="8.6" fill="#f4f8ff" stroke="#3a5aa0" stroke-width="1"/>
<circle cx="15" cy="14.2" r="7" fill="url(#sgl)" stroke="#2f5fb0" stroke-width="0.8"/>
<ellipse cx="13" cy="11.8" rx="4" ry="3.4" fill="url(#shl)"/>
</svg>
<div class="t" style="left:1850.5px;top:531.9px;font-size:12.5px;line-height:12.5px">Count:20</div>
<div class="a" style="left:967px;top:550px;width:939px;height:312px;background:#fff;border:1px solid #d0d0d0"></div>
<div class="a" style="left:968px;top:551px;width:937px;height:27px;background:linear-gradient(#fff 0%,#fff 40%,#f0f2f5 100%);border-bottom:1px solid #d5d5d5"></div>
<div class="t" style="left:971.5px;top:557.9px;font-size:12.3px;line-height:12.3px">Lot ID</div>
<div class="a" style="left:1074px;top:551px;width:1px;height:27px;background:#dadada"></div>
<div class="t" style="left:1078.5px;top:557.9px;font-size:12.3px;line-height:12.3px">Wafer ID</div>
<div class="a" style="left:1161px;top:551px;width:1px;height:27px;background:#dadada"></div>
<div class="t" style="left:1165.5px;top:557.9px;font-size:12.3px;line-height:12.3px">Status</div>
<div class="a" style="left:1248px;top:551px;width:1px;height:27px;background:#dadada"></div>
<div class="t" style="left:1252.5px;top:557.9px;font-size:12.3px;line-height:12.3px">Description</div>
<div class="a" style="left:1346px;top:551px;width:1px;height:27px;background:#dadada"></div>
<div class="t" style="left:1350.5px;top:557.9px;font-size:12.3px;line-height:12.3px">Recipe</div>
<div class="a" style="left:1465px;top:551px;width:1px;height:27px;background:#dadada"></div>
<div class="t" style="left:1469.5px;top:557.9px;font-size:12.3px;line-height:12.3px">Start Time</div>
<div class="a" style="left:1590px;top:551px;width:1px;height:27px;background:#dadada"></div>
<div class="t" style="left:1594.5px;top:557.9px;font-size:12.3px;line-height:12.3px">Max</div>
<div class="a" style="left:1665px;top:551px;width:1px;height:27px;background:#dadada"></div>
<div class="t" style="left:1669.5px;top:557.9px;font-size:12.3px;line-height:12.3px">Min</div>
<div class="a" style="left:1740px;top:551px;width:1px;height:27px;background:#dadada"></div>
<div class="t" style="left:1744.5px;top:557.9px;font-size:12.3px;line-height:12.3px">Mean</div>
<div class="a" style="left:1814px;top:551px;width:1px;height:27px;background:#dadada"></div>
<div class="t" style="left:1818.5px;top:557.9px;font-size:12.3px;line-height:12.3px">3Sigma</div>
<div class="a" style="left:1888px;top:551px;width:1px;height:27px;background:#dadada"></div>
<div class="a" style="left:1578px;top:562px;width:0;height:0;border-left:3.5px solid transparent;border-right:3.5px solid transparent;border-top:4px solid #222"></div>
<div class="a" style="left:968px;top:578px;width:920px;height:60px;background:#a9a9a9;border-bottom:1px solid #dcdcdc"></div>
<div class="a" style="left:1074px;top:578px;width:1px;height:60px;background:#e2e2e2"></div>
<div class="a" style="left:1161px;top:578px;width:1px;height:60px;background:#e2e2e2"></div>
<div class="a" style="left:1248px;top:578px;width:1px;height:60px;background:#e2e2e2"></div>
<div class="a" style="left:1346px;top:578px;width:1px;height:60px;background:#e2e2e2"></div>
<div class="a" style="left:1465px;top:578px;width:1px;height:60px;background:#e2e2e2"></div>
<div class="a" style="left:1590px;top:578px;width:1px;height:60px;background:#e2e2e2"></div>
<div class="a" style="left:1665px;top:578px;width:1px;height:60px;background:#e2e2e2"></div>
<div class="a" style="left:1740px;top:578px;width:1px;height:60px;background:#e2e2e2"></div>
<div class="a" style="left:1814px;top:578px;width:1px;height:60px;background:#e2e2e2"></div>
<div class="t" style="left:971.5px;top:602.6px;font-size:12.3px;line-height:12.3px;color:#000">PFP09669</div>
<svg class="a" style="left:1077.5px;top:602.0px" width="13" height="13" viewBox="0 0 13 13">
<circle cx="6.5" cy="6.5" r="6" fill="#d01818"/><path d="M4 4l5 5M9 4l-5 5" stroke="#fff" stroke-width="1.6"/></svg>
<div class="t" style="left:1095.0px;top:602.6px;font-size:12.3px;line-height:12.3px;color:#000">LP1Wafe...</div>
<div class="t" style="left:1165.5px;top:602.6px;font-size:12.3px;line-height:12.3px;color:#000">Failed</div>
<div class="t" style="left:1256.5px;top:602.6px;font-size:12.3px;line-height:12.3px;color:#000">Failed Mark C...</div>
<div class="t" style="left:1350.5px;top:602.6px;font-size:12.3px;line-height:12.3px;color:#000;letter-spacing:0.4px">Product\TQV2.0\...</div>
<div class="t" style="left:1469.5px;top:602.6px;font-size:12.3px;line-height:12.3px;color:#000;letter-spacing:0.55px">2025/10/21/10:50...</div>
<div class="t" style="left:1595.5px;top:581.1px;font-size:12.3px;line-height:12.3px;color:#000">X:20609.04</div>
<div class="t" style="left:1596.5px;top:595.1px;font-size:12.3px;line-height:12.3px;color:#000">Y:15132.96</div>
<div class="t" style="left:1670.5px;top:581.1px;font-size:12.3px;line-height:12.3px;color:#000">X:-20465.8</div>
<div class="t" style="left:1670.5px;top:595.1px;font-size:12.3px;line-height:12.3px;color:#000">1</div>
<div class="t" style="left:1671.5px;top:609.1px;font-size:12.3px;line-height:12.3px;color:#000">Y:-20310.4</div>
<div class="t" style="left:1670.5px;top:623.1px;font-size:12.3px;line-height:12.3px;color:#000">5</div>
<div class="t" style="left:1745.5px;top:581.1px;font-size:12.3px;line-height:12.3px;color:#000">X:535.97</div>
<div class="t" style="left:1746.5px;top:595.1px;font-size:12.3px;line-height:12.3px;color:#000">Y:-3508.00</div>
<div class="t" style="left:1819.5px;top:581.1px;font-size:12.3px;line-height:12.3px;color:#000">X:25099.51</div>
<div class="t" style="left:1820.5px;top:595.1px;font-size:12.3px;line-height:12.3px;color:#000">Y:20076.55</div>
<div class="a" style="left:968px;top:638px;width:920px;height:61px;background:#eff7fd;border-bottom:1px solid #dcdcdc"></div>
<div class="a" style="left:1074px;top:638px;width:1px;height:61px;background:#dcdcdc"></div>
<div class="a" style="left:1161px;top:638px;width:1px;height:61px;background:#dcdcdc"></div>
<div class="a" style="left:1248px;top:638px;width:1px;height:61px;background:#dcdcdc"></div>
<div class="a" style="left:1346px;top:638px;width:1px;height:61px;background:#dcdcdc"></div>
<div class="a" style="left:1465px;top:638px;width:1px;height:61px;background:#dcdcdc"></div>
<div class="a" style="left:1590px;top:638px;width:1px;height:61px;background:#dcdcdc"></div>
<div class="a" style="left:1665px;top:638px;width:1px;height:61px;background:#dcdcdc"></div>
<div class="a" style="left:1740px;top:638px;width:1px;height:61px;background:#dcdcdc"></div>
<div class="a" style="left:1814px;top:638px;width:1px;height:61px;background:#dcdcdc"></div>
<div class="t" style="left:971.5px;top:664.1px;font-size:12.3px;line-height:12.3px;color:#000">PFP09669</div>
<svg class="a" style="left:1077.5px;top:662.5px" width="13" height="13" viewBox="0 0 13 13">
<circle cx="6.5" cy="6.5" r="6" fill="#d01818"/><path d="M4 4l5 5M9 4l-5 5" stroke="#fff" stroke-width="1.6"/></svg>
<div class="t" style="left:1095.0px;top:664.1px;font-size:12.3px;line-height:12.3px;color:#000">LP1Wafe...</div>
<div class="t" style="left:1165.5px;top:664.1px;font-size:12.3px;line-height:12.3px;color:#000">Failed</div>
<div class="t" style="left:1256.5px;top:664.1px;font-size:12.3px;line-height:12.3px;color:#000">Failed Mark C...</div>
<div class="t" style="left:1350.5px;top:664.1px;font-size:12.3px;line-height:12.3px;color:#000;letter-spacing:0.4px">Product\TQV2.0\...</div>
<div class="t" style="left:1469.5px;top:664.1px;font-size:12.3px;line-height:12.3px;color:#000;letter-spacing:0.55px">2025/10/21/10:35...</div>
<div class="t" style="left:1595.5px;top:641.8px;font-size:12.3px;line-height:12.3px;color:#000">X:18352.44</div>
<div class="t" style="left:1596.5px;top:655.8px;font-size:12.3px;line-height:12.3px;color:#000">Y:20761.13</div>
<div class="t" style="left:1670.5px;top:641.8px;font-size:12.3px;line-height:12.3px;color:#000">X:-20954.3</div>
<div class="t" style="left:1670.5px;top:655.8px;font-size:12.3px;line-height:12.3px;color:#000">6</div>
<div class="t" style="left:1671.5px;top:669.8px;font-size:12.3px;line-height:12.3px;color:#000">Y:-20123.2</div>
<div class="t" style="left:1670.5px;top:683.8px;font-size:12.3px;line-height:12.3px;color:#000">7</div>
<div class="t" style="left:1745.5px;top:641.8px;font-size:12.3px;line-height:12.3px;color:#000">X:-577.03</div>
<div class="t" style="left:1746.5px;top:655.8px;font-size:12.3px;line-height:12.3px;color:#000">Y:-5184.33</div>
<div class="t" style="left:1819.5px;top:641.8px;font-size:12.3px;line-height:12.3px;color:#000">X:26662.55</div>
<div class="t" style="left:1820.5px;top:655.8px;font-size:12.3px;line-height:12.3px;color:#000">Y:24191.04</div>
<div class="a" style="left:968px;top:699px;width:920px;height:61px;background:#9ed6f1;border-bottom:1px solid #dcdcdc"></div>
<div class="a" style="left:1074px;top:699px;width:1px;height:61px;background:#86c0dd"></div>
<div class="a" style="left:1161px;top:699px;width:1px;height:61px;background:#86c0dd"></div>
<div class="a" style="left:1248px;top:699px;width:1px;height:61px;background:#86c0dd"></div>
<div class="a" style="left:1346px;top:699px;width:1px;height:61px;background:#86c0dd"></div>
<div class="a" style="left:1465px;top:699px;width:1px;height:61px;background:#86c0dd"></div>
<div class="a" style="left:1590px;top:699px;width:1px;height:61px;background:#86c0dd"></div>
<div class="a" style="left:1665px;top:699px;width:1px;height:61px;background:#86c0dd"></div>
<div class="a" style="left:1740px;top:699px;width:1px;height:61px;background:#86c0dd"></div>
<div class="a" style="left:1814px;top:699px;width:1px;height:61px;background:#86c0dd"></div>
<div class="t" style="left:971.5px;top:725.1px;font-size:12.3px;line-height:12.3px;color:#0b2b52">PFP09669</div>
<svg class="a" style="left:1077.5px;top:723.5px" width="13" height="13" viewBox="0 0 13 13">
<circle cx="6.5" cy="6.5" r="6" fill="#8b3f63"/><path d="M4 4l5 5M9 4l-5 5" stroke="#fff" stroke-width="1.6"/></svg>
<div class="t" style="left:1095.0px;top:725.1px;font-size:12.3px;line-height:12.3px;color:#0b2b52">LP1Wafe...</div>
<div class="t" style="left:1165.5px;top:725.1px;font-size:12.3px;line-height:12.3px;color:#0b2b52">Failed</div>
<div class="t" style="left:1256.5px;top:725.1px;font-size:12.3px;line-height:12.3px;color:#0b2b52">Failed Mark C...</div>
<div class="t" style="left:1350.5px;top:725.1px;font-size:12.3px;line-height:12.3px;color:#0b2b52;letter-spacing:0.4px">Product\TQV2.0\...</div>
<div class="t" style="left:1469.5px;top:725.1px;font-size:12.3px;line-height:12.3px;color:#0b2b52;letter-spacing:0.55px">2025/10/21/10:08...</div>
<div class="t" style="left:1595.5px;top:702.8px;font-size:12.3px;line-height:12.3px;color:#0b2b52">X:18553.32</div>
<div class="t" style="left:1596.5px;top:716.8px;font-size:12.3px;line-height:12.3px;color:#0b2b52">Y:20746.14</div>
<div class="t" style="left:1670.5px;top:702.8px;font-size:12.3px;line-height:12.3px;color:#0b2b52">X:-20843.9</div>
<div class="t" style="left:1670.5px;top:716.8px;font-size:12.3px;line-height:12.3px;color:#0b2b52">6</div>
<div class="t" style="left:1671.5px;top:730.8px;font-size:12.3px;line-height:12.3px;color:#0b2b52">Y:-20120.2</div>
<div class="t" style="left:1670.5px;top:744.8px;font-size:12.3px;line-height:12.3px;color:#0b2b52">2</div>
<div class="t" style="left:1745.5px;top:702.8px;font-size:12.3px;line-height:12.3px;color:#0b2b52">X:-532.89</div>
<div class="t" style="left:1746.5px;top:716.8px;font-size:12.3px;line-height:12.3px;color:#0b2b52">Y:-5338.49</div>
<div class="t" style="left:1819.5px;top:702.8px;font-size:12.3px;line-height:12.3px;color:#0b2b52">X:26498.30</div>
<div class="t" style="left:1820.5px;top:716.8px;font-size:12.3px;line-height:12.3px;color:#0b2b52">Y:24231.17</div>
<div class="a" style="left:968px;top:760px;width:920px;height:33px;background:#eff7fd;border-bottom:1px solid #dcdcdc"></div>
<div class="a" style="left:1074px;top:760px;width:1px;height:33px;background:#dcdcdc"></div>
<div class="a" style="left:1161px;top:760px;width:1px;height:33px;background:#dcdcdc"></div>
<div class="a" style="left:1248px;top:760px;width:1px;height:33px;background:#dcdcdc"></div>
<div class="a" style="left:1346px;top:760px;width:1px;height:33px;background:#dcdcdc"></div>
<div class="a" style="left:1465px;top:760px;width:1px;height:33px;background:#dcdcdc"></div>
<div class="a" style="left:1590px;top:760px;width:1px;height:33px;background:#dcdcdc"></div>
<div class="a" style="left:1665px;top:760px;width:1px;height:33px;background:#dcdcdc"></div>
<div class="a" style="left:1740px;top:760px;width:1px;height:33px;background:#dcdcdc"></div>
<div class="a" style="left:1814px;top:760px;width:1px;height:33px;background:#dcdcdc"></div>
<div class="t" style="left:971.5px;top:772.1px;font-size:12.3px;line-height:12.3px;color:#000">PFP16516</div>
<div class="t" style="left:1078.5px;top:772.1px;font-size:12.3px;line-height:12.3px;color:#000">LP1Wafer22</div>
<div class="t" style="left:1165.5px;top:772.1px;font-size:12.3px;line-height:12.3px;color:#000">Pass</div>
<div class="t" style="left:1252.5px;top:772.1px;font-size:12.3px;line-height:12.3px;color:#000">(296/288)</div>
<div class="t" style="left:1350.5px;top:772.1px;font-size:12.3px;line-height:12.3px;color:#000;letter-spacing:0.4px">Product\WSH\WS...</div>
<div class="t" style="left:1469.5px;top:772.1px;font-size:12.3px;line-height:12.3px;color:#000;letter-spacing:0.55px">2025/10/19/20:08...</div>
<div class="t" style="left:1595.5px;top:763.8px;font-size:12.3px;line-height:12.3px;color:#000">X:876.78</div>
<div class="t" style="left:1596.5px;top:777.8px;font-size:12.3px;line-height:12.3px;color:#000">Y:1495.67</div>
<div class="t" style="left:1670.5px;top:763.8px;font-size:12.3px;line-height:12.3px;color:#000">X:-2116.66</div>
<div class="t" style="left:1671.5px;top:777.8px;font-size:12.3px;line-height:12.3px;color:#000">Y:-585.39</div>
<div class="t" style="left:1745.5px;top:763.8px;font-size:12.3px;line-height:12.3px;color:#000">X:-295.05</div>
<div class="t" style="left:1746.5px;top:777.8px;font-size:12.3px;line-height:12.3px;color:#000">Y:216.99</div>
<div class="t" style="left:1819.5px;top:763.8px;font-size:12.3px;line-height:12.3px;color:#000">X:2035.08</div>
<div class="t" style="left:1820.5px;top:777.8px;font-size:12.3px;line-height:12.3px;color:#000">Y:1030.50</div>
<div class="a" style="left:968px;top:793px;width:920px;height:33px;background:#ffffff;border-bottom:1px solid #dcdcdc"></div>
<div class="a" style="left:1074px;top:793px;width:1px;height:33px;background:#dcdcdc"></div>
<div class="a" style="left:1161px;top:793px;width:1px;height:33px;background:#dcdcdc"></div>
<div class="a" style="left:1248px;top:793px;width:1px;height:33px;background:#dcdcdc"></div>
<div class="a" style="left:1346px;top:793px;width:1px;height:33px;background:#dcdcdc"></div>
<div class="a" style="left:1465px;top:793px;width:1px;height:33px;background:#dcdcdc"></div>
<div class="a" style="left:1590px;top:793px;width:1px;height:33px;background:#dcdcdc"></div>
<div class="a" style="left:1665px;top:793px;width:1px;height:33px;background:#dcdcdc"></div>
<div class="a" style="left:1740px;top:793px;width:1px;height:33px;background:#dcdcdc"></div>
<div class="a" style="left:1814px;top:793px;width:1px;height:33px;background:#dcdcdc"></div>
<div class="t" style="left:971.5px;top:805.1px;font-size:12.3px;line-height:12.3px;color:#000">PFP16516</div>
<svg class="a" style="left:1077.5px;top:803.5px" width="13" height="13" viewBox="0 0 13 13">
<circle cx="6.5" cy="6.5" r="6" fill="#d01818"/><path d="M4 4l5 5M9 4l-5 5" stroke="#fff" stroke-width="1.6"/></svg>
<div class="t" style="left:1095.0px;top:805.1px;font-size:12.3px;line-height:12.3px;color:#000">LP1Wafe...</div>
<div class="t" style="left:1165.5px;top:805.1px;font-size:12.3px;line-height:12.3px;color:#000">Failed</div>
<div class="t" style="left:1256.5px;top:805.1px;font-size:12.3px;line-height:12.3px;color:#000">Failed Mark C...</div>
<div class="t" style="left:1350.5px;top:805.1px;font-size:12.3px;line-height:12.3px;color:#000;letter-spacing:0.4px">Product\WSH\WS...</div>
<div class="t" style="left:1469.5px;top:805.1px;font-size:12.3px;line-height:12.3px;color:#000;letter-spacing:0.55px">2025/10/19/18:54...</div>
<div class="t" style="left:1595.5px;top:796.8px;font-size:12.3px;line-height:12.3px;color:#000">X:-130.24</div>
<div class="t" style="left:1596.5px;top:810.8px;font-size:12.3px;line-height:12.3px;color:#000">Y:1228.52</div>
<div class="t" style="left:1670.5px;top:796.8px;font-size:12.3px;line-height:12.3px;color:#000">X:-2077.68</div>
<div class="t" style="left:1671.5px;top:810.8px;font-size:12.3px;line-height:12.3px;color:#000">Y:-260.99</div>
<div class="t" style="left:1745.5px;top:796.8px;font-size:12.3px;line-height:12.3px;color:#000">X:-888.57</div>
<div class="t" style="left:1746.5px;top:810.8px;font-size:12.3px;line-height:12.3px;color:#000">Y:453.03</div>
<div class="t" style="left:1819.5px;top:796.8px;font-size:12.3px;line-height:12.3px;color:#000">X:1485.95</div>
<div class="t" style="left:1820.5px;top:810.8px;font-size:12.3px;line-height:12.3px;color:#000">Y:816.05</div>
<div class="a" style="left:968px;top:826px;width:920px;height:33px;background:#eff7fd;border-bottom:1px solid #dcdcdc"></div>
<div class="a" style="left:1074px;top:826px;width:1px;height:33px;background:#dcdcdc"></div>
<div class="a" style="left:1161px;top:826px;width:1px;height:33px;background:#dcdcdc"></div>
<div class="a" style="left:1248px;top:826px;width:1px;height:33px;background:#dcdcdc"></div>
<div class="a" style="left:1346px;top:826px;width:1px;height:33px;background:#dcdcdc"></div>
<div class="a" style="left:1465px;top:826px;width:1px;height:33px;background:#dcdcdc"></div>
<div class="a" style="left:1590px;top:826px;width:1px;height:33px;background:#dcdcdc"></div>
<div class="a" style="left:1665px;top:826px;width:1px;height:33px;background:#dcdcdc"></div>
<div class="a" style="left:1740px;top:826px;width:1px;height:33px;background:#dcdcdc"></div>
<div class="a" style="left:1814px;top:826px;width:1px;height:33px;background:#dcdcdc"></div>
<div class="t" style="left:971.5px;top:838.1px;font-size:12.3px;line-height:12.3px;color:#000">PFP06447</div>
<div class="t" style="left:1078.5px;top:838.1px;font-size:12.3px;line-height:12.3px;color:#000">LP1Wafer10</div>
<div class="t" style="left:1165.5px;top:838.1px;font-size:12.3px;line-height:12.3px;color:#000">Pass</div>
<div class="t" style="left:1252.5px;top:838.1px;font-size:12.3px;line-height:12.3px;color:#000">(682/648)</div>
<div class="t" style="left:1350.5px;top:838.1px;font-size:12.3px;line-height:12.3px;color:#000;letter-spacing:0.4px">Product\YWZ\PH...</div>
<div class="t" style="left:1469.5px;top:838.1px;font-size:12.3px;line-height:12.3px;color:#000;letter-spacing:0.55px">2025/10/17/09:32...</div>
<div class="t" style="left:1595.5px;top:829.8px;font-size:12.3px;line-height:12.3px;color:#000">X:511.34</div>
<div class="t" style="left:1596.5px;top:843.8px;font-size:12.3px;line-height:12.3px;color:#000">Y:631.78</div>
<div class="t" style="left:1670.5px;top:829.8px;font-size:12.3px;line-height:12.3px;color:#000">X:-1792.69</div>
<div class="t" style="left:1671.5px;top:843.8px;font-size:12.3px;line-height:12.3px;color:#000">Y:-837.74</div>
<div class="t" style="left:1745.5px;top:829.8px;font-size:12.3px;line-height:12.3px;color:#000">X:-653.21</div>
<div class="t" style="left:1746.5px;top:843.8px;font-size:12.3px;line-height:12.3px;color:#000">Y:-138.08</div>
<div class="t" style="left:1819.5px;top:829.8px;font-size:12.3px;line-height:12.3px;color:#000">X:1946.89</div>
<div class="t" style="left:1820.5px;top:843.8px;font-size:12.3px;line-height:12.3px;color:#000">Y:1037.62</div>
<div class="a" style="left:1888px;top:577px;width:18px;height:285px;background:#f0f0f0;border-left:1px solid #e0e0e0"></div>
<div class="a" style="left:1894px;top:584px;width:0;height:0;border-left:3.5px solid transparent;border-right:3.5px solid transparent;border-bottom:4px solid #444"></div>
<div class="a" style="left:1894px;top:851px;width:0;height:0;border-left:3.5px solid transparent;border-right:3.5px solid transparent;border-top:4px solid #444"></div>
<div class="a" style="left:1890px;top:595px;width:15px;height:73px;border:1px solid #8a8a8a;border-radius:2px;background:linear-gradient(90deg,#f4f4f4 0%,#ebebeb 45%,#d6d6d9 50%,#c9c9cd 100%)"></div>
<div class="a" style="left:1894px;top:628px;width:7px;height:1px;background:#555"></div>
<div class="a" style="left:1894px;top:631px;width:7px;height:1px;background:#555"></div>
<div class="a" style="left:1894px;top:634px;width:7px;height:1px;background:#555"></div>
<div class="a" style="left:1905px;top:699px;width:1px;height:61px;background:#8ccbeb"></div>
</body></html>
